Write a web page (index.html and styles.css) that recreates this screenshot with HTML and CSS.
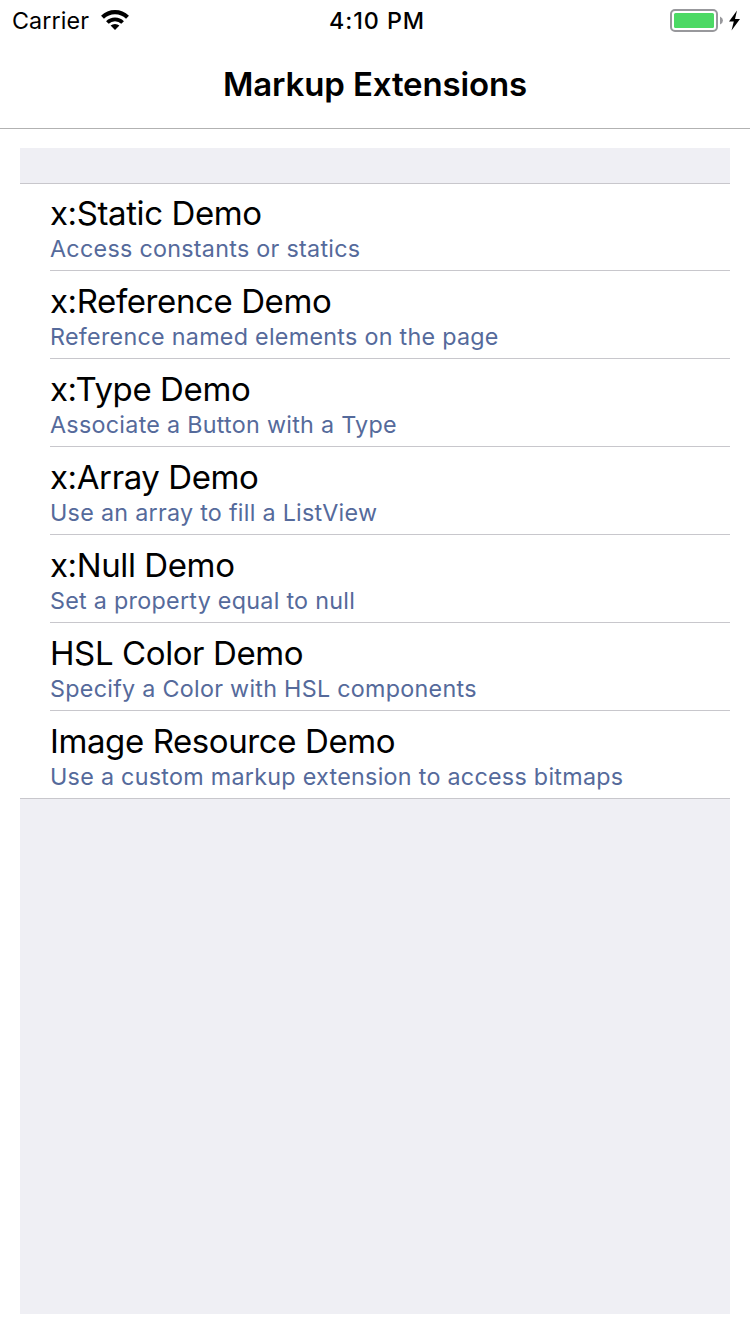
FILE: index.html
```html
<!DOCTYPE html>
<html lang="en">
<head>
<meta charset="utf-8">
<title>Markup Extensions</title>
<link rel="stylesheet" href="styles.css">
</head>
<body>
<header class="header">
  <div class="status">
    <div class="status-left">
      <span class="carrier">Carrier</span>
      <svg class="wifi" width="28" height="20" viewBox="0 0 28 20"><path d="M14 20 9.600 15.600a6.500 6.500 0 0 1 8.800 0z"/><path d="M6.400 12.500a10.800 10.800 0 0 1 15.200 0" fill="none" stroke="#000" stroke-width="3.800"/><path d="M1.500 7.300a17.700 17.700 0 0 1 25 0" fill="none" stroke="#000" stroke-width="4.100"/></svg>
    </div>
    <span class="time">4:10 PM</span>
    <div class="status-right">
      <svg width="72" height="24" viewBox="0 0 72 24"><rect x="1" y="1" width="46" height="21" rx="4" fill="none" stroke="#98989c" stroke-width="2"/><rect x="4" y="4" width="40" height="15" rx="1.500" fill="#4cd964"/><path d="M50 7.500q3 1.500 3 4t-3 4z" fill="#98989c"/><path d="M67 1.500 59 12.500h4.800l-2.300 9 8.500-11.500h-5z"/></svg>
    </div>
  </div>
  <h1 class="title">Markup Extensions</h1>
</header>
<main class="table">
  <ul class="list">
    <li class="row"><div class="cell"><span class="name">x:Static Demo</span><span class="detail">Access constants or statics</span></div></li>
    <li class="row"><div class="cell"><span class="name">x:Reference Demo</span><span class="detail">Reference named elements on the page</span></div></li>
    <li class="row"><div class="cell"><span class="name">x:Type Demo</span><span class="detail">Associate a Button with a Type</span></div></li>
    <li class="row"><div class="cell"><span class="name">x:Array Demo</span><span class="detail">Use an array to fill a ListView</span></div></li>
    <li class="row"><div class="cell"><span class="name">x:Null Demo</span><span class="detail">Set a property equal to null</span></div></li>
    <li class="row"><div class="cell"><span class="name">HSL Color Demo</span><span class="detail">Specify a Color with HSL components</span></div></li>
    <li class="row"><div class="cell"><span class="name">Image Resource Demo</span><span class="detail">Use a custom markup extension to access bitmaps</span></div></li>
  </ul>
</main>
</body>
</html>
```
FILE: styles.css
```css
* { box-sizing: border-box; }
body {
  margin: 0;
  height: 1334px;
  display: flex;
  flex-direction: column;
  background: #fff;
  color: #000;
  font-family: Inter, "Liberation Sans", sans-serif;
}
.header { height: 129px; border-bottom: 1px solid #b2b2b2; }
.status {
  height: 42px;
  display: grid;
  grid-template-columns: 1fr auto 1fr;
  align-items: center;
  padding: 0 8px 0 12px;
}
.status-left { display: flex; align-items: center; gap: 12px; }
.wifi { margin-top: -2px; }
.status-right { display: flex; justify-content: flex-end; }
.carrier { padding-bottom: 2px; font-size: 23.3px; letter-spacing: 0.1px; }
.time {
  padding-bottom: 2px;
  font-size: 23.3px;
  font-weight: 500;
  letter-spacing: 0.9px;
}
.title {
  margin: 0;
  height: 86px;
  line-height: 85px;
  text-align: center;
  font-size: 33px;
  font-weight: 600;
  letter-spacing: -0.13px;
}
.table { flex: 1; margin: 19px 20px 20px; padding-top: 35px; background: #efeff4; }
.list {
  margin: 0;
  padding: 0;
  list-style: none;
  background: #fff;
  border-top: 1px solid #c8c7cc;
  border-bottom: 1px solid #c8c7cc;
}
.row { padding-left: 30px; height: 88px; }
.row:first-child, .row:last-child { height: 87px; }
.cell {
  height: 100%;
  display: flex;
  flex-direction: column;
  justify-content: flex-end;
  border-bottom: 1px solid #c8c7cc;
  white-space: nowrap;
}
.row:last-child .cell { border-bottom: 0; }
.name {
  padding-bottom: 1px;
  font-size: 33px;
  line-height: 40px;
  letter-spacing: -0.4px;
}
.detail {
  font-size: 23.3px;
  line-height: 30px;
  letter-spacing: 0.28px;
  padding-bottom: 6px;
  color: #556a9b;
}
```
